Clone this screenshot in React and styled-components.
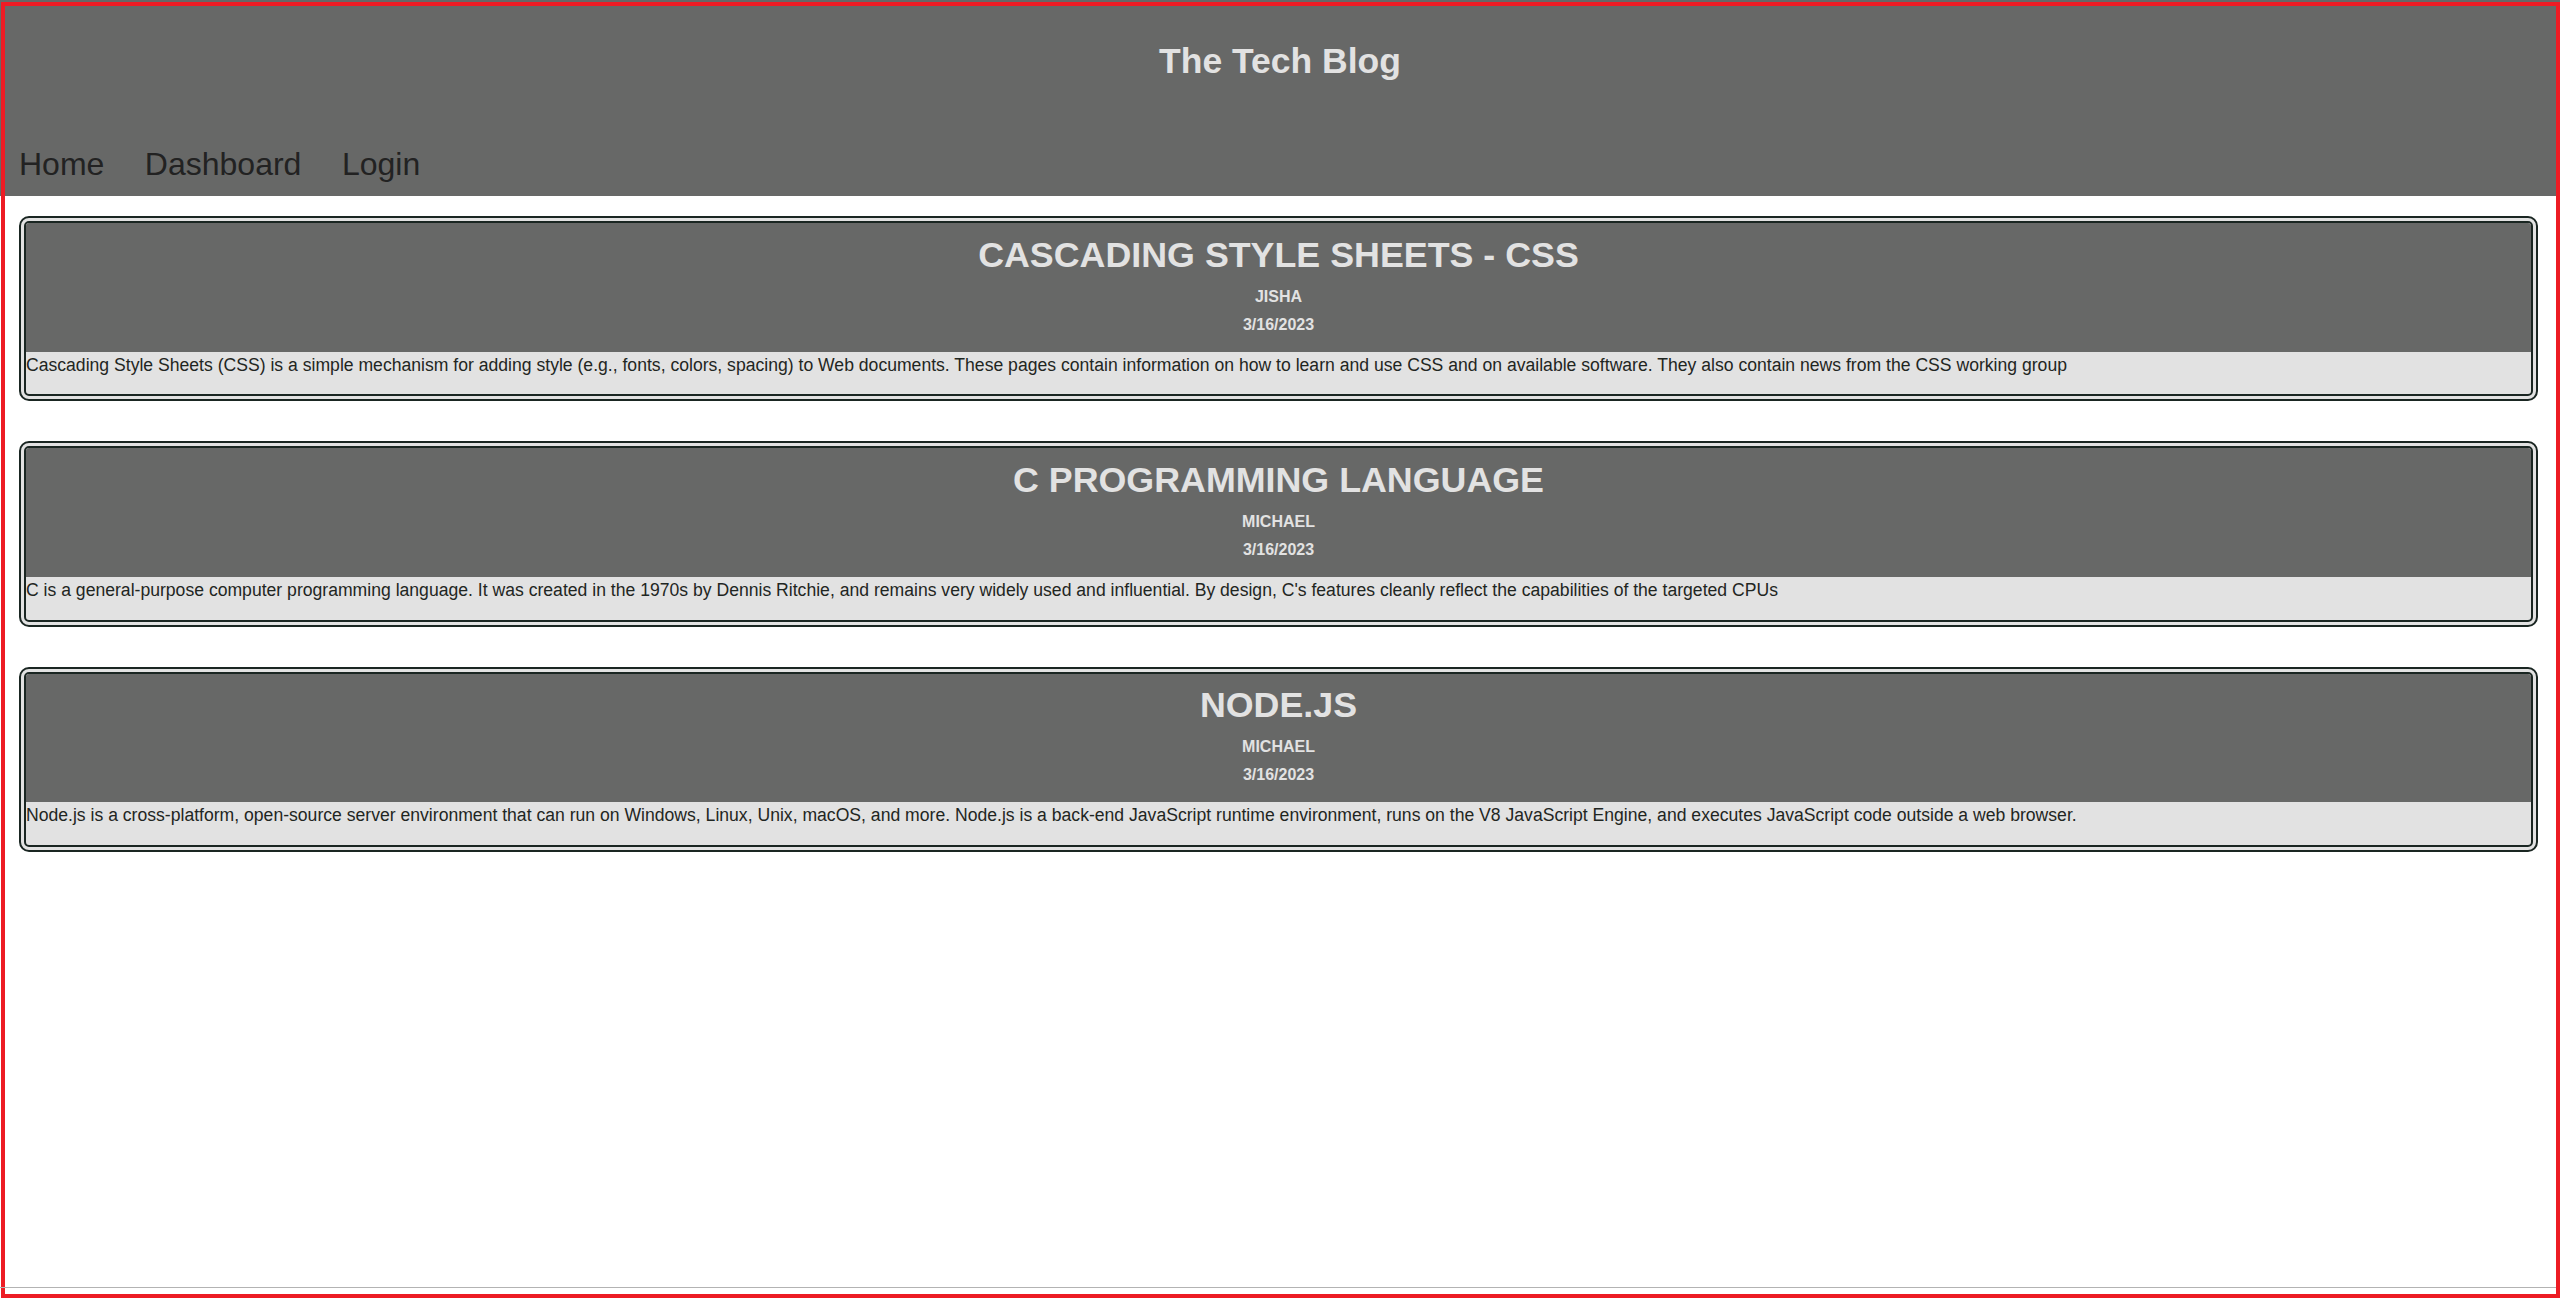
import React from "react";
import styled, { createGlobalStyle } from "styled-components";

const posts = [
  {
    title: "Cascading Style Sheets - CSS",
    author: "Jisha",
    date: "3/16/2023",
    body:
      "Cascading Style Sheets (CSS) is a simple mechanism for adding style (e.g., fonts, colors, spacing) to Web documents. These pages contain information on how to learn and use CSS and on available software. They also contain news from the CSS working group",
  },
  {
    title: "C programming language",
    author: "Michael",
    date: "3/16/2023",
    body:
      "C is a general-purpose computer programming language. It was created in the 1970s by Dennis Ritchie, and remains very widely used and influential. By design, C's features cleanly reflect the capabilities of the targeted CPUs",
  },
  {
    title: "Node.js",
    author: "Michael",
    date: "3/16/2023",
    body:
      "Node.js is a cross-platform, open-source server environment that can run on Windows, Linux, Unix, macOS, and more. Node.js is a back-end JavaScript runtime environment, runs on the V8 JavaScript Engine, and executes JavaScript code outside a web browser.",
  },
];

const App = () => {
  return (
    <>
      <GlobalStyle />
      <Header>
        <Title>The Tech Blog</Title>
        <Nav>
          <NavLink href="#">Home</NavLink>
          <NavLink href="#">Dashboard</NavLink>
          <NavLink href="#">Login</NavLink>
        </Nav>
      </Header>
      <Main>
        {posts.map((post) => (
          <Card key={post.title}>
            <CardHead>
              <PostTitle>{post.title}</PostTitle>
              <Meta>{post.author}</Meta>
              <Meta $gap={10}>{post.date}</Meta>
            </CardHead>
            <CardBody>{post.body}</CardBody>
          </Card>
        ))}
      </Main>
      <Frame />
      <ViewportLine />
    </>
  );
};

export default App;

const GlobalStyle = createGlobalStyle`
  html, body {
    margin: 0;
    background: #fff;
    font-family: "Liberation Sans", Arial, sans-serif;
  }
`;

const Header = styled.header`
  background-color: #676867;
  padding: 41px 0 13px;
`;

const Title = styled.h1`
  margin: 0;
  text-align: center;
  font-size: 35.5px;
  font-weight: 700;
  color: #e2e2e2;
`;

const Nav = styled.nav`
  display: flex;
  gap: 40.5px;
  padding-left: 19px;
  margin-top: 63.5px;
`;

const NavLink = styled.a`
  font-size: 32px;
  color: #222;
  text-decoration: none;
`;

const Main = styled.main`
  display: flex;
  flex-direction: column;
  gap: 40.2px;
  padding: 20.5px 22px 0 19px;
`;

const Card = styled.article`
  border: 7px double #1a2622;
  border-radius: 10px;
  background: #e2e2e2;
  overflow: hidden;
`;

const CardHead = styled.div`
  background-color: #676867;
  padding: 11.5px 0 18px;
  text-align: center;
  color: #e2e2e2;
`;

const PostTitle = styled.h2`
  margin: 0;
  font-size: 35.8px;
  font-weight: 700;
  text-transform: uppercase;
`;

const Meta = styled.p`
  margin: ${(p) => p.$gap || 12}px 0 0;
  font-size: 16px;
  font-weight: 700;
  text-transform: uppercase;
`;

const CardBody = styled.p`
  margin: 0;
  padding: 3px 0 18.7px;
  font-size: 17.6px;
  color: #1f2622;
`;

const Frame = styled.div`
  position: fixed;
  top: 2px;
  left: 1px;
  right: 0;
  bottom: 2px;
  border: 4px solid #ed1c24;
  pointer-events: none;
`;

const ViewportLine = styled.div`
  position: fixed;
  left: 0;
  right: 4px;
  top: 1287px;
  height: 1px;
  background: #b3b3b3;
  pointer-events: none;
`;
